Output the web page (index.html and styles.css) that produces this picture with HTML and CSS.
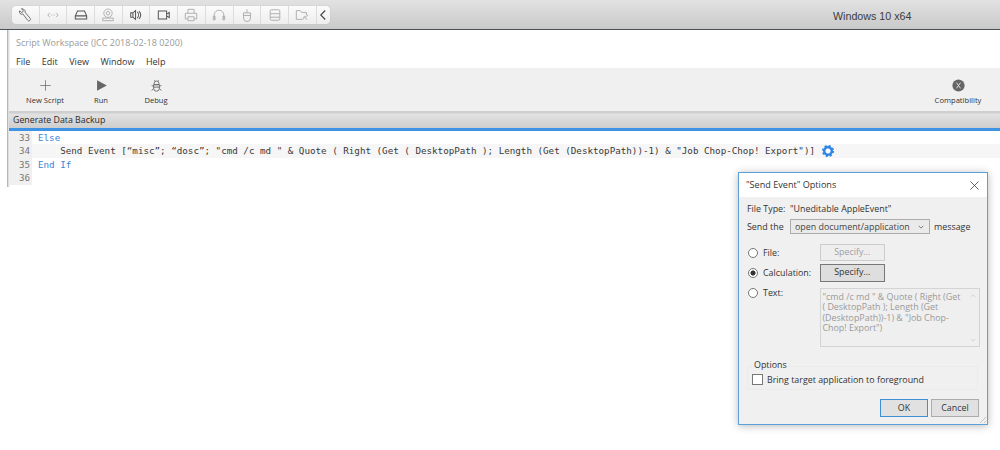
FILE: index.html
```html
<!DOCTYPE html>
<html lang="en">
<head>
<meta charset="utf-8">
<title>Script Workspace</title>
<link rel="stylesheet" href="styles.css">
</head>
<body>
<header class="vmbar">
  <div class="pill">
    <div class="seg"><svg class="wrench" viewBox="0 0 16 16"><path d="M1.800 3.200a3.500 3.500 0 0 0 .7 3.300l2 .8 1-.6 5.500 7.300a1.700 1.700 0 0 0 2.900-2.100L8 4.700l.1-1.600L6.200 1.200 3.900.8l2.100 2.300-.6 1.500-1.500.4z"/></svg></div>
    <div class="seg off"><svg viewBox="0 0 16 16"><path d="M4.500 5.500 2 8l2.500 2.500M11.500 5.500 14 8l-2.500 2.500M6 8h.7M7.700 8h.7M9.400 8h.7"/></svg></div>
    <div class="seg"><svg viewBox="0 0 16 16"><path d="M1.500 9 4 3.500h8L14.500 9v3.500h-13zM1.500 9h13"/></svg></div>
    <div class="seg off"><svg viewBox="0 0 16 16"><circle cx="8" cy="6" r="4.800"/><circle cx="8" cy="6" r="2"/><path d="M2 14.500h12v-3H2z"/></svg></div>
    <div class="seg"><svg viewBox="0 0 16 16"><path d="M2 5.500v5h2.500l3 2.500V3l-3 2.500zM9.500 4.500a5 5 0 0 1 0 7M11.500 3.500a7 7 0 0 1 0 9M4.500 5.500v5"/></svg></div>
    <div class="seg"><svg viewBox="0 0 16 16"><path d="M1.500 3.500h9.500v9H1.500zM11 7l3-2v6l-3-2"/></svg></div>
    <div class="seg off"><svg viewBox="0 0 16 16"><path d="M4.500 6V1.500h7V6M4.500 12.500h-3V6h13v6.500h-3M4.500 10h7v4.500h-7z"/></svg></div>
    <div class="seg off"><svg viewBox="0 0 16 16"><path d="M2.500 13V8a5.500 5.500 0 0 1 11 0v5M1.500 9.500h2v4h-2zM12.500 9.500h2v4h-2z"/></svg></div>
    <div class="seg off"><svg viewBox="0 0 16 16"><path d="M4 5.500h8v6a4 4 0 0 1-8 0zM4 8.500h8M8 5.500V1.500"/></svg></div>
    <div class="seg off"><svg viewBox="0 0 16 16"><path d="M2.500 3.500a1.500 1.500 0 0 1 1.500-1.500h8a1.500 1.500 0 0 1 1.500 1.500v9a1.500 1.500 0 0 1-1.500 1.500H4a1.500 1.500 0 0 1-1.500-1.500zM2.500 6.500h11M2.500 10.500h11"/></svg></div>
    <div class="seg off"><svg viewBox="0 0 16 16"><path d="M1.500 13V3h4.500l1.500 2h5.500v3M1.500 13h7M9 13l2-4M15 8l-4 3 3 2"/></svg></div>
    <div class="seg last"><svg viewBox="0 0 16 16"><path class="chev" d="M11 2 5 8l6 6"/></svg></div>
  </div>
  <div class="vmname">Windows 10 x64</div>
</header>
<div class="desk">
  <div class="edge"></div>
  <main class="win">
    <div class="wintitle">Script Workspace (JCC 2018-02-18 0200)</div>
    <nav class="menu"><span>File</span><span>Edit</span><span>View</span><span>Window</span><span>Help</span></nav>
    <div class="tools">
      <div class="tool t-new"><svg viewBox="0 0 16 16"><path class="thin" d="M8 1.500v13M1.500 8h13"/></svg><span>New Script</span></div>
      <div class="tool t-run"><svg viewBox="0 0 16 16"><path class="solid" d="M2.500 1.500 14.500 8 2.500 14.500z"/></svg><span>Run</span></div>
      <div class="tool t-debug"><svg viewBox="0 0 16 16"><path class="bug" d="M5 5.500a3 3 0 0 1 6 0v1.500H5zM4.500 7h7v4.500a3.500 3.500 0 0 1-7 0zM5.500 1.500 6.500 3M10.500 1.500 9.500 3M2 8l2.500 1M14 8l-2.500 1M2 14l2.500-2M14 14l-2.500-2M4.500 10h7"/></svg><span>Debug</span></div>
      <div class="tool t-compat"><svg viewBox="0 0 16 16"><circle class="solid" cx="8" cy="8" r="7.500"/><path class="xmark" d="M5.500 4.500 10.500 11.500M10.500 4.500 5.500 11.500"/></svg><span>Compatibility</span></div>
    </div>
    <div class="scriptname">Generate Data Backup</div>
    <div class="code">
      <div class="line"><span class="num">33</span><span class="kw">Else</span></div>
      <div class="line cur"><span class="num">34</span><span class="src">    Send Event [“misc”; “dosc”; "cmd /c md " &amp; Quote ( Right (Get ( DesktopPath ); Length (Get (DesktopPath))-1) &amp; "Job Chop-Chop! Export")]</span><svg class="gear" viewBox="0 0 16 16"><circle class="gear-o" cx="8" cy="8" r="5"/><circle class="gear-i" cx="8" cy="8" r="2.300"/></svg></div>
      <div class="line"><span class="num">35</span><span class="kw">End If</span></div>
      <div class="line"><span class="num">36</span></div>
    </div>
  </main>
</div>
<section class="dialog">
  <div class="dlgtitle"><span>"Send Event" Options</span><svg class="close" viewBox="0 0 10 10"><path d="M.5.500l9 9M9.500.500l-9 9"/></svg></div>
  <div class="dlgbody">
    <div class="row filetype"><span class="ftl">File Type:</span><span>"Uneditable AppleEvent"</span></div>
    <div class="row sendrow"><span class="stl">Send the</span><div class="select"><span>open document/application</span><svg viewBox="0 0 8 5"><path d="M1 1l3 3 3-3"/></svg></div><span>message</span></div>
    <div class="row optrow r1"><span class="radio"></span><span class="rl">File:</span><div class="btn spec dis">Specify...</div></div>
    <div class="row optrow r2"><span class="radio on"></span><span class="rl">Calculation:</span><div class="btn spec act">Specify...</div></div>
    <div class="row textrow"><span class="radio"></span><span class="rl">Text:</span>
      <div class="ta"><p>"cmd /c md " &amp; Quote ( Right (Get ( DesktopPath ); Length (Get (DesktopPath))-1) &amp; "Job Chop-Chop! Export")</p>
        <div class="tascroll"><svg viewBox="0 0 8 5"><path d="M1 4l3-3 3 3"/></svg><svg viewBox="0 0 8 5"><path d="M1 1l3 3 3-3"/></svg></div></div></div>
    <div class="legend">Options</div>
    <div class="group"><span class="check"></span><span>Bring target application to foreground</span></div>
    <div class="row actions"><div class="btn ok">OK</div><div class="btn cancel">Cancel</div></div>
  </div>
  <div class="grip"></div>
</section>
</body>
</html>
```
FILE: styles.css
```css
* { box-sizing: border-box; }
html, body { margin: 0; height: 450px; overflow: hidden; background: #fff; }
body { font-family: "Open Sans", "Noto Sans", sans-serif; color: #333; position: relative; }

.vmbar { height: 30px; background: linear-gradient(#e2e2e2, #c9c9c9); border-bottom: 1px solid #4a5058; display: flex; align-items: flex-start; padding: 6px 0 0 12px; }
.pill { display: flex; height: 18px; width: 318px; background: linear-gradient(#fbfbfb, #eeeeee); border-radius: 4px; box-shadow: 0 0 1px #aaa; }
.seg { width: 27.700px; border-right: 1px solid #dcdcdc; display: flex; align-items: center; justify-content: center; }
.seg.last { width: 13px; border: 0; }
.seg svg { width: 14px; height: 14px; fill: none; stroke: #555; stroke-width: 1.150; }
.seg svg.wrench { stroke-width: .95; stroke: #5a5a5a; }
.seg.off svg { stroke: #ababab; stroke-width: 1.050; }
.seg.last svg { width: 12px; height: 14px; stroke: #444; stroke-width: 1.500; }
.vmname { margin-left: 503px; padding-top: 3px; font: 10.700px/14px "Liberation Sans", sans-serif; color: #3c3c3c; }

.desk { display: flex; height: 420px; }
.edge { margin-left: 7px; width: 3px; height: 157px; flex: none; background: linear-gradient(90deg, #9aa3aa 0, #c8ccd0 33%, #f0f0f0 66%); }
.win { flex: 1; min-width: 0; }
.wintitle { height: 22px; padding: 7px 0 0 6px; font-size: 9.030px; line-height: 12px; color: #9a9a9a; white-space: nowrap; }
.menu { height: 16px; display: flex; gap: 11.500px; padding: 3px 0 0 6px; font-size: 9px; line-height: 13px; color: #333; }
.tools { height: 43px; background: #f0f0f0; display: flex; }
.tool { display: flex; flex-direction: column; align-items: center; font-size: 7.600px; line-height: 10px; color: #333; padding-top: 11px; white-space: nowrap; }
.tool svg { width: 13px; height: 13px; margin-bottom: 3px; fill: none; }
.t-new { margin-left: 16px; width: 38px; }
.t-run { margin-left: 24px; width: 26px; }
.t-debug { margin-left: 29px; width: 26px; }
.t-compat { margin-left: auto; margin-right: 19px; width: 46px; }
.thin { stroke: #666; stroke-width: .9; }
.solid { fill: #666; }
.bug { stroke: #666; stroke-width: 1.100; }
.xmark { stroke: #ddd; stroke-width: 1.200; }

.scriptname { height: 20px; background: linear-gradient(#cfcfcf 0, #cfcfcf 2px, #e2e2e2 3px, #cdcdcd 17px, #3f93e4 17px, #3f93e4 20px); margin-left: -1px; padding: 3px 0 0 4px; font-size: 8.800px; line-height: 13px; color: #2a2a2a; }

.code { font: 9.235px/13.400px "DejaVu Sans Mono", monospace; }
.line { height: 13.400px; display: flex; align-items: center; white-space: pre; }
.num { width: 22px; flex: none; padding-right: 2px; text-align: right; background: #f0f0f0; color: #777; height: 100%; margin-right: 6px; }
.kw { color: #3a84d8; }
.src { color: #3a3a3a; }
.cur { background: #f6f6f6; }
.gear { width: 16px; height: 16px; margin-left: 5px; flex: none; fill: none; }
.gear-o { fill: #2f86e3; stroke: #2f86e3; stroke-width: 2.200; stroke-dasharray: 2 1.930; }
.gear-i { fill: #fff; stroke: #fff; stroke-width: .6; }

.dialog { position: absolute; left: 738px; top: 172px; width: 250px; height: 253px; background: #f0f0f0; border: 1px solid #5da0d8; box-shadow: 0 1px 8px rgba(0,0,0,.28); font-size: 8.900px; line-height: 12px; color: #333; }
.dlgtitle { height: 24px; background: #fff; display: flex; align-items: center; justify-content: space-between; padding: 0 8px 0 7px; font-size: 9.100px; }
.close { width: 9px; height: 9px; fill: none; stroke: #444; stroke-width: .9; }
.dlgbody { padding: 6px 8px 0 8px; }
.row { display: flex; align-items: center; white-space: nowrap; }
.filetype { height: 12px; }
.ftl { width: 43px; flex: none; }
.sendrow { height: 15px; margin-top: 4px; }
.stl { width: 43px; flex: none; }
.select { width: 140px; height: 15px; margin-right: 4px; border: 1px solid #acacac; background: #eaeaea; display: flex; align-items: center; justify-content: space-between; padding: 0 5px 0 4px; color: #444; }
.select svg { width: 6px; height: 4px; fill: none; stroke: #555; }
.r1 { height: 17px; margin-top: 10px; }
.r2 { height: 18px; margin-top: 3px; }
.radio { width: 10px; height: 10px; flex: none; margin-left: 1px; border: 1px solid #777; border-radius: 50%; background: #fff; display: block; }
.radio.on { background: radial-gradient(circle, #333 0, #333 2.300px, #fff 2.800px); }
.rl { margin-left: 5px; width: 56.500px; flex: none; }
.btn { border: 1px solid #adadad; background: #e1e1e1; text-align: center; color: #333; }
.spec { width: 65.500px; height: 100%; line-height: 14px; }
.spec.dis { background: #eee; border: 1px solid #ccc; color: #a0a0a0; }
.spec.act { border: 1px solid #777; background: #dedede; }
.textrow { align-items: flex-start; margin-top: 6px; height: 59px; }
.textrow .rl { line-height: 10px; }
.ta { width: 160px; height: 59px; flex: none; border: 1px solid #d4d4d4; background: #efefef; display: flex; color: #9a9a9a; font-size: 8.900px; line-height: 10.400px; white-space: normal; }
.ta p { margin: 3px 4px 0 2px; flex: 1; }
.tascroll { width: 11px; flex: none; display: flex; flex-direction: column; justify-content: space-between; padding: 5px 0 4px; align-items: center; }
.tascroll svg { width: 6px; height: 4px; fill: none; stroke: #ccc; }
.legend { margin: 12px 0 0 7px; height: 12px; position: relative; }
.group { height: 24px; margin-top: -5px; width: 231px; border: 1px solid #ebebeb; border-radius: 2px; display: flex; align-items: center; padding: 3px 0 0 4px; }
.check { width: 11px; height: 11px; flex: none; border: 1px solid #777; background: #fff; margin-right: 4px; }
.actions { justify-content: flex-end; gap: 3px; margin-top: 9px; width: 232px; }
.ok, .cancel { width: 48px; height: 18px; line-height: 16px; }
.ok { border: 1px solid #3f8fd6; }
.grip { position: absolute; right: 1px; bottom: 1px; width: 9px; height: 9px; background: repeating-linear-gradient(135deg, transparent 0 2px, #c4c4c4 2px 3px); clip-path: polygon(100% 0, 100% 100%, 0 100%); }
```
